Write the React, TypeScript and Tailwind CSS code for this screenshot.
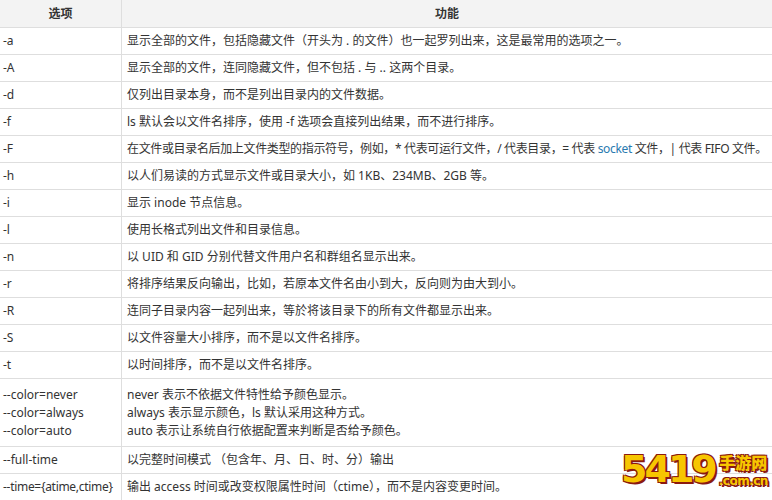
const rows: [string, React.ReactNode][] = [
  ["-a", "显示全部的文件，包括隐藏文件（开头为 . 的文件）也一起罗列出来，这是最常用的选项之一。"],
  ["-A", "显示全部的文件，连同隐藏文件，但不包括 . 与 .. 这两个目录。"],
  ["-d", "仅列出目录本身，而不是列出目录内的文件数据。"],
  ["-f", "ls 默认会以文件名排序，使用 -f 选项会直接列出结果，而不进行排序。"],
  ["-F", <span className="tracking-[-0.35px]">在文件或目录名后加上文件类型的指示符号，例如，* 代表可运行文件，/ 代表目录，= 代表 <span className="text-[#2a7ab0]">socket</span> 文件，| 代表 FIFO 文件。</span>],
  ["-h", "以人们易读的方式显示文件或目录大小，如 1KB、234MB、2GB 等。"],
  ["-i", "显示 inode 节点信息。"],
  ["-l", "使用长格式列出文件和目录信息。"],
  ["-n", "以 UID 和 GID 分别代替文件用户名和群组名显示出来。"],
  ["-r", "将排序结果反向输出，比如，若原本文件名由小到大，反向则为由大到小。"],
  ["-R", "连同子目录内容一起列出来，等於将该目录下的所有文件都显示出来。"],
  ["-S", "以文件容量大小排序，而不是以文件名排序。"],
  ["-t", "以时间排序，而不是以文件名排序。"],
];

import React from "react";

function Row({ a, b, h = "h-[27px]" }: { a: React.ReactNode; b: React.ReactNode; h?: string }) {
  return (
    <div className={`grid grid-cols-[122px_1fr] border-b border-[#dedede] ${h}`}>
      <div className="border-r border-[#dedede] pl-[3px] flex items-center">{a}</div>
      <div className="pl-[5px] flex items-center whitespace-nowrap">{b}</div>
    </div>
  );
}

const ts = "[text-shadow:2px_2px_0_#8b1a10,-1px_-1px_0_#8b1a10,1px_-1px_0_#8b1a10,-1px_1px_0_#8b1a10]";

export default function App() {
  return (
    <div className="relative w-[772px] h-[500px] overflow-hidden bg-white text-[12px] text-[#333]" style={{ fontFamily: '"Noto Sans", "Noto Sans CJK SC", sans-serif' }}>
      <div className="grid grid-cols-[122px_1fr] h-[28px] bg-[#f3f3f3] border-b border-[#dedede] font-bold">
        <div className="border-r border-[#dedede] flex items-center justify-center">选项</div>
        <div className="flex items-center justify-center">功能</div>
      </div>
      {rows.map(([a, b]) => <Row key={a} a={a} b={b} />)}
      <div className="grid grid-cols-[122px_1fr] border-b border-[#dedede] h-[68px]">
        <div className="border-r border-[#dedede] pl-[3px] flex flex-col justify-center leading-[18px]">
          <div>--color=never</div><div>--color=always</div><div>--color=auto</div>
        </div>
        <div className="pl-[5px] flex flex-col justify-center leading-[18px]">
          <div>never 表示不依据文件特性给予颜色显示。</div>
          <div>always 表示显示颜色，ls 默认采用这种方式。</div>
          <div>auto 表示让系统自行依据配置来判断是否给予颜色。</div>
        </div>
      </div>
      <Row a="--full-time" b="以完整时间模式 （包含年、月、日、时、分）输出" />
      <Row a={<span className="tracking-[-0.3px]">--time={"{atime,ctime}"}</span>} b="输出 access 时间或改变权限属性时间（ctime），而不是内容变更时间。" />
      <div className="absolute left-[621px] top-[450px] flex items-end font-black" style={{ fontFamily: '"DejaVu Sans", "Noto Sans CJK SC", sans-serif' }}>
        <span className={`text-[38px] leading-none tracking-[-3px] text-[#f7c600] ${ts}`}>5419</span>
        <div className="flex flex-col items-center ml-[4px] mb-[1px]">
          <span className={`text-[16px] leading-none text-[#f7c600] ${ts}`}>手游网</span>
          <span className={`text-[12px] leading-none mt-[3px] tracking-[-0.5px] text-[#f7c600] ${ts}`}>.com.cn</span>
        </div>
      </div>
    </div>
  );
}
